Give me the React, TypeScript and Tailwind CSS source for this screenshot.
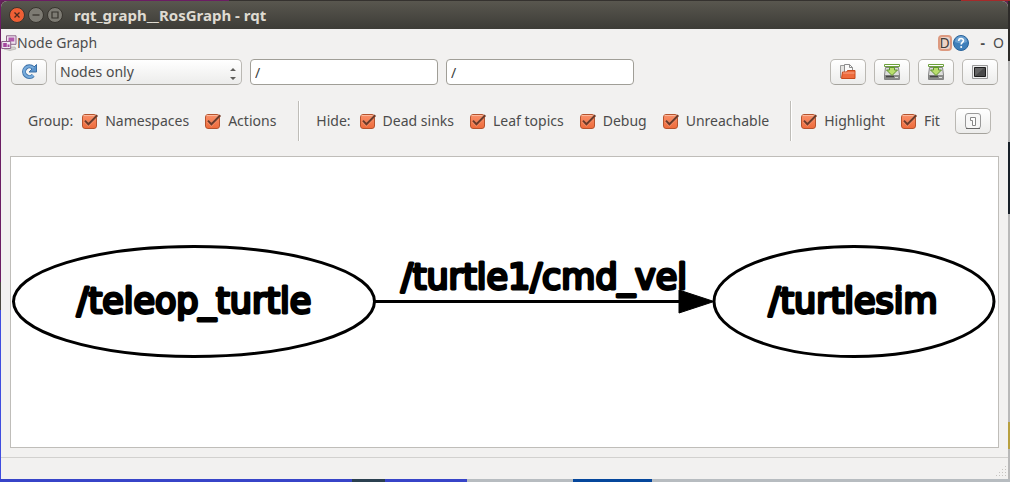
import { useId, type ReactNode } from "react";

const buttonFace =
  "flex h-[26px] w-9 shrink-0 items-center justify-center rounded-[5px] border border-[#bab8b3] border-b-[#a5a39d] bg-linear-to-b from-white to-[#ececeb]";

function ToolButton({ label, children }: { label: string; children: ReactNode }) {
  return (
    <button type="button" aria-label={label} className={buttonFace}>
      {children}
    </button>
  );
}

function Check({ label }: { label: string }) {
  const id = useId();
  return (
    <div className="flex items-center gap-[7px]">
      <span className="grid size-[17px] shrink-0 place-items-center">
        <input
          id={id}
          type="checkbox"
          defaultChecked
          className="peer col-start-1 row-start-1 size-[15px] appearance-none rounded-[3px] border border-[#b5532d] bg-white checked:bg-linear-to-b checked:from-[#f98f68] checked:to-[#ee6c3c]"
        />
        <svg
          viewBox="0 0 17 17"
          className="pointer-events-none invisible col-start-1 row-start-1 size-[17px] peer-checked:visible"
          fill="none"
          aria-hidden="true"
        >
          <path d="M2.5 2.5h11" stroke="#fbb89c" />
          <path d="M4 8.2 7.4 11.6 15.8 2.2" stroke="#f9a98a" strokeWidth="3.2" opacity=".5" />
          <path d="M4 7.6 7.4 11.2 16.3 2.2" stroke="#6b3b2a" strokeWidth="2" />
        </svg>
      </span>
      <label htmlFor={id} className="whitespace-nowrap">
        {label}
      </label>
    </div>
  );
}

function Divider() {
  return <div className="h-10 w-[2px] shrink-0 border-l border-[#bfbdb8] bg-white" />;
}

function SaveIcon() {
  return (
    <svg viewBox="0 0 18 18" className="size-[18px]" aria-hidden="true">
      <path d="M2.5 4.5 1.5 12v4.5h15V12l-1-7.500z" fill="#dcdddb" stroke="#858585" />
      <path d="M2 12h14v4H2z" fill="#8a8c89" />
      <path d="M3 13.500h8" stroke="#444" strokeWidth="1.500" />
      <path d="M12 14.500h3" stroke="#ddd" />
      <path d="M1.500 1.500h15v2h-15z" fill="#fff" stroke="#6da13c" />
      <path d="M6.500 4.500h5V7h3L9 12.500 3.500 7h3z" fill="#b9de6d" stroke="#5f9130" />
    </svg>
  );
}

function TitleBar() {
  return (
    <header className="flex h-7 items-center gap-[3px] rounded-t-[6px] bg-linear-to-b from-[#59574f] to-[#3d3c37] px-2 text-[#dfdbd2]">
      <button type="button" aria-label="Close">
        <svg viewBox="0 0 16 16" className="size-4">
          <circle cx="8" cy="8" r="7.500" fill="#ee5f35" stroke="#37342e" />
          <path d="m5.500 5.500 5 5m0-5-5 5" stroke="#4b2a1d" strokeWidth="1.300" />
        </svg>
      </button>
      <button type="button" aria-label="Minimize">
        <svg viewBox="0 0 16 16" className="size-4">
          <circle cx="8" cy="8" r="7.500" fill="#7d7b73" stroke="#37342e" />
          <path d="M4.500 8h7" stroke="#37342e" strokeWidth="1.300" />
        </svg>
      </button>
      <button type="button" aria-label="Maximize">
        <svg viewBox="0 0 16 16" className="size-4">
          <circle cx="8" cy="8" r="7.500" fill="#7d7b73" stroke="#37342e" />
          <path d="M5 5h6v6H5z" stroke="#37342e" fill="none" strokeWidth="1.200" />
        </svg>
      </button>
      <h1 className="ml-2 text-[15px] font-bold">rqt_graph__RosGraph - rqt</h1>
    </header>
  );
}

function DockTitle() {
  return (
    <div className="flex h-[27px] items-center">
      <svg viewBox="0 0 16 16" className="size-4" aria-hidden="true">
        <path d="m3 14 3-2h8l1 2-6 1.500z" fill="#d4d2cf" stroke="#aaa7a4" strokeWidth=".6" />
        <path d="M5.500 .8h9.500v8.500H5.500z" fill="#eee4ef" stroke="#8d6489" />
        <path d="M7.500 2.500h5.800v4H7.500z" fill="#b35aac" />
        <path d="M.7 6.500h9v7h-9z" fill="#f2eaf3" stroke="#8d6489" />
        <path d="M2.200 8h3.600v4H2.200zm4.300 1.500h2v2.500h-2z" fill="#a5489e" />
      </svg>
      <h2>Node Graph</h2>
      <div className="ml-auto flex items-center">
        <button
          type="button"
          aria-label="Reload plugin"
          className="flex h-4 w-[14px] items-center justify-center rounded-[4px] border-2 border-[#dd9a80] bg-[#ecd2c5] leading-5 text-[#3f3c3a]"
        >
          D
        </button>
        <button type="button" aria-label="Help" className="ml-px">
          <svg viewBox="0 0 16 16" className="size-4">
            <circle cx="8" cy="8" r="7.500" fill="#3f7fba" stroke="#2a639a" />
            <path d="M2 7a6 6 0 0 1 12 0q-6 2.500-12 0" fill="#6ba0d0" />
            <path d="M5.700 6c0-3.400 4.800-3.200 4.800-.4 0 1.800-2.300 1.900-2.300 4" fill="none" stroke="#fff" strokeWidth="1.600" />
            <circle cx="8.200" cy="12" r="1" fill="#fff" />
          </svg>
        </button>
        <button type="button" className="ml-3 font-bold">-</button>
        <button type="button" className="ml-2 mr-1">O</button>
      </div>
    </div>
  );
}

const field =
  "h-[26px] min-w-0 w-[188px] rounded-[4px] border border-[#a09e97] bg-white px-1 leading-5 text-[#3c3c3c]";

function Toolbar() {
  return (
    <div className="flex items-center gap-2 px-[10px] pt-[3px]">
      <ToolButton label="Refresh">
        <svg viewBox="0 0 18 18" className="size-[18px]" aria-hidden="true">
          <path d="M13.200 12.300A5.300 5.300 0 1 1 13 4.800" fill="none" stroke="#3a6ea5" strokeWidth="4" />
          <path d="M16.500 1.500v7.500H9z" fill="#5b93cb" stroke="#3a6ea5" />
          <path d="M13.200 12.300A5.300 5.300 0 1 1 13.500 5.300" fill="none" stroke="#76abdc" strokeWidth="2.400" />
        </svg>
      </ToolButton>
      <div className="grid min-w-0 items-center">
        <select
          aria-label="Graph type"
          className="col-start-1 row-start-1 h-[26px] w-[187px] min-w-0 appearance-none rounded-[5px] border border-[#bab8b3] border-b-[#a5a39d] bg-linear-to-b from-white to-[#ececeb] px-1"
        >
          <option>Nodes only</option>
        </select>
        <svg viewBox="0 0 6 14" className="pointer-events-none col-start-1 row-start-1 mr-[6px] mt-1 h-[14px] w-[6px] justify-self-end" fill="#5f5e5b" aria-hidden="true">
          <path d="M0 4 3 1l3 3zM0 10h6l-3 3z" />
        </svg>
      </div>
      <input aria-label="Node filter" defaultValue="/" className={field} />
      <input aria-label="Topic filter" defaultValue="/" className={field} />
      <div className="ml-auto flex gap-2">
        <ToolButton label="Load graph">
          <svg viewBox="0 0 18 18" className="size-[18px]" aria-hidden="true">
            <path d="M1.500 15V2.500h6l1.500 2" fill="#e5e4e2" stroke="#999" />
            <path d="M5.500 1.500h5l3 3V11h-8z" fill="#fafafa" stroke="#8d8d8d" />
            <path d="M10.500 1.500v3h3" fill="none" stroke="#8d8d8d" />
            <path d="M2.500 15.500 3.500 9h4l1-1.500h7.500v8z" fill="#ee6b3c" stroke="#c64a1c" />
            <path d="M4 10h11.500" stroke="#f9a687" />
          </svg>
        </ToolButton>
        <ToolButton label="Save as DOT">
          <SaveIcon />
        </ToolButton>
        <ToolButton label="Save as SVG">
          <SaveIcon />
        </ToolButton>
        <ToolButton label="Save as image">
          <svg viewBox="0 0 18 18" className="size-[18px]" aria-hidden="true">
            <path d="M1.500 2.500h15v13h-15z" fill="#eee" stroke="#999" />
            <path d="M3.500 4.500h11v9h-11z" fill="#4a4a4a" stroke="#1d1d1d" />
            <path d="M4 13V5h9z" fill="#777" opacity=".6" />
          </svg>
        </ToolButton>
      </div>
    </div>
  );
}

function Options() {
  return (
    <div className="flex items-center pl-[27px] pr-[19px] pt-4">
      <div className="mr-[22px] flex items-center gap-[15px]">
        <div className="flex items-center gap-2">
          <span>Group:</span>
          <Check label="Namespaces" />
        </div>
        <Check label="Actions" />
      </div>
      <Divider />
      <div className="ml-4 mr-[21px] flex items-center gap-[15px]">
        <div className="flex items-center gap-2">
          <span>Hide:</span>
          <Check label="Dead sinks" />
        </div>
        <Check label="Leaf topics" />
        <Check label="Debug" />
        <Check label="Unreachable" />
      </div>
      <Divider />
      <div className="ml-2 flex flex-1 items-center gap-[15px]">
        <Check label="Highlight" />
        <Check label="Fit" />
        <div className="ml-auto">
          <ToolButton label="Fit in view">
            <svg viewBox="0 0 18 18" className="size-[18px]" fill="none" aria-hidden="true">
              <rect x="1.500" y="1.500" width="15" height="15" rx="2.500" fill="#f7f7f7" stroke="#999" />
              <path d="M2 16.500h14" stroke="#666" />
              <path d="M6.500 5.500h5v8h-3v-5h-2z" fill="#fff" stroke="#888" />
            </svg>
          </ToolButton>
        </div>
      </div>
    </div>
  );
}

function Graph() {
  return (
    <main className="mx-[9px] mt-[15px] border border-[#bfbdb9] bg-white">
      <svg
        viewBox="0 0 987 290"
        className="block h-auto w-full"
        role="img"
        aria-label="Node graph"
      >
        <g fill="none" stroke="#000" strokeWidth="3">
          <ellipse cx="183" cy="144.500" rx="180.500" ry="55" />
          <ellipse cx="843" cy="144.500" rx="140" ry="55" />
          <path d="M364 144.500h306" />
        </g>
        <path d="m668 133 35 11.500-35 11.500z" stroke="#000" />
        <g
          fontSize="35"
          fill="#000"
          stroke="#000"
          strokeWidth="3"
          strokeLinejoin="round"
          textAnchor="middle"
          className="font-['DejaVu_Sans',sans-serif]"
        >
          <text x="183" y="156">/teleop_turtle</text>
          <text x="533" y="132">/turtle1/cmd_vel</text>
          <text x="842" y="156">/turtlesim</text>
        </g>
      </svg>
    </main>
  );
}

function SizeGrip() {
  return (
    <svg viewBox="0 0 12 12" className="size-3" fill="#c6c4c0" aria-hidden="true">
      <path d="M9 0h1v1H9zM9 3h1v1H9zM6 3h1v1H6zM9 6h1v1H9zM6 6h1v1H6zM3 6h1v1H3zM9 9h1v1H9zM6 9h1v1H6zM3 9h1v1H3zM0 9h1v1H0z" />
    </svg>
  );
}

export default function App() {
  return (
    <div className="grid min-h-screen grid-cols-[1px_minmax(0,1fr)_2px] grid-rows-[1px_1fr_3px] bg-[#5e2750] font-['Noto_Sans',sans-serif] text-sm leading-5 text-[#4c4c4c]">
      <div className="col-span-3 bg-[linear-gradient(90deg,#6b1d63_229px,#35322f_229px_961px,#a52a2a_961px)]" />
      <div className="bg-[linear-gradient(#6b1d63_281px,#4a4740_281px_309px,#3f4ce0_309px)]" />
      <div className="rounded-t-[6px] bg-[#f2f1f0]">
        <TitleBar />
        <DockTitle />
        <Toolbar />
        <Options />
        <Graph />
        <footer className="mt-[9px] flex h-[22px] items-end justify-end border-t border-[#d2d1cf] pb-[1px]">
          <SizeGrip />
        </footer>
      </div>
      <div className="bg-[linear-gradient(#2d2b29_60px,#b4b4b4_60px_141px,#182029_141px_213px,#b9b9b9_213px_421px,#b8a040_421px_448px,#b9b9b9_448px)]" />
      <div className="col-span-3 bg-[linear-gradient(90deg,#3744c8_352px,#2b4050_352px_385px,#3744c8_385px_467px,#b7bcc0_467px_573px,#05479c_573px_652px,#b7bcc0_652px)]" />
    </div>
  );
}
